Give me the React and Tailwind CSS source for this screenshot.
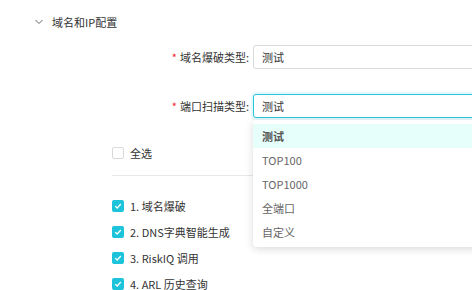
import React from 'react';

const options = ['测试', 'TOP100', 'TOP1000', '全端口', '自定义'];
const tasks = ['1. 域名爆破', '2. DNS字典智能生成', '3. RiskIQ 调用', '4. ARL 历史查询'];

const Check = ({ checked }) => (
  <span
    className={
      checked
        ? 'flex h-[12px] w-[12px] shrink-0 items-center justify-center rounded-[2px] bg-[#1cc3da]'
        : 'h-[12px] w-[12px] shrink-0 rounded-[2px] border border-[#d9d9d9] bg-white'
    }
  >
    {checked && (
      <svg width="8" height="8" viewBox="0 0 8 8" fill="none">
        <path d="M1.2 4.1 L3.2 6 L6.8 2" stroke="white" strokeWidth="1.3" />
      </svg>
    )}
  </span>
);

const App = () => {
  return (
    <div
      className="relative h-[290px] w-[472px] overflow-hidden bg-white text-[11px] text-[#333]"
      style={{ fontFamily: '"Noto Sans CJK SC", "Noto Sans", sans-serif' }}
    >
      {/* section heading */}
      <div className="mt-[14px] flex h-[16px] items-center pl-[35px]">
        <svg width="8" height="6" viewBox="0 0 8 6" fill="none">
          <path d="M0.5 1 L4 4.5 L7.5 1" stroke="#666" strokeWidth="1" />
        </svg>
        <span className="ml-[9px] leading-none">域名和IP配置</span>
      </div>

      {/* form rows */}
      <div className="mt-[15px] flex items-center">
        <div className="flex w-[253px] shrink-0 justify-end pr-[4px]">
          <span className="mr-[3px] text-[#f5222d]">*</span>
          <span>域名爆破类型:</span>
        </div>
        <div className="flex h-[24px] w-[260px] shrink-0 items-center rounded-[3px] border border-[#d9d9d9] px-[8px]">
          测试
        </div>
      </div>

      <div className="mt-[25px] flex items-center">
        <div className="flex w-[253px] shrink-0 justify-end pr-[4px]">
          <span className="mr-[3px] text-[#f5222d]">*</span>
          <span>端口扫描类型:</span>
        </div>
        <div className="relative shrink-0">
          <div className="flex h-[24px] w-[260px] items-center rounded-[3px] border border-[#26c6dc] px-[8px] shadow-[0_0_0_2px_rgba(38,198,220,0.12)]">
            测试
          </div>
          <div className="absolute left-0 top-[26px] z-10 w-[260px] rounded-[4px] bg-white pt-[4px] pb-[3px] shadow-[0_2px_8px_rgba(0,0,0,0.15)]">
            {options.map((opt, i) => (
              <div
                key={opt}
                className={
                  i === 0
                    ? 'flex h-[24px] items-center bg-[#e6fffb] pl-[9px] font-semibold text-[#555]'
                    : 'flex h-[24px] items-center pl-[9px] text-[#666]'
                }
              >
                {opt}
              </div>
            ))}
          </div>
        </div>
      </div>

      {/* checkbox list */}
      <div className="pl-[112px]">
        <div className="mt-[27px] flex h-[16px] items-center gap-[6px]">
          <Check checked={false} />
          <span>全选</span>
        </div>
        <div className="mt-[14px] h-px w-[200px] bg-[#e8e8e8]" />
        <div className="mt-[22px] flex flex-col gap-[10px]">
          {tasks.map((t) => (
            <div key={t} className="flex h-[16px] items-center gap-[6px]">
              <Check checked />
              <span className="whitespace-nowrap">{t}</span>
            </div>
          ))}
        </div>
      </div>
    </div>
  );
};

export default App;
